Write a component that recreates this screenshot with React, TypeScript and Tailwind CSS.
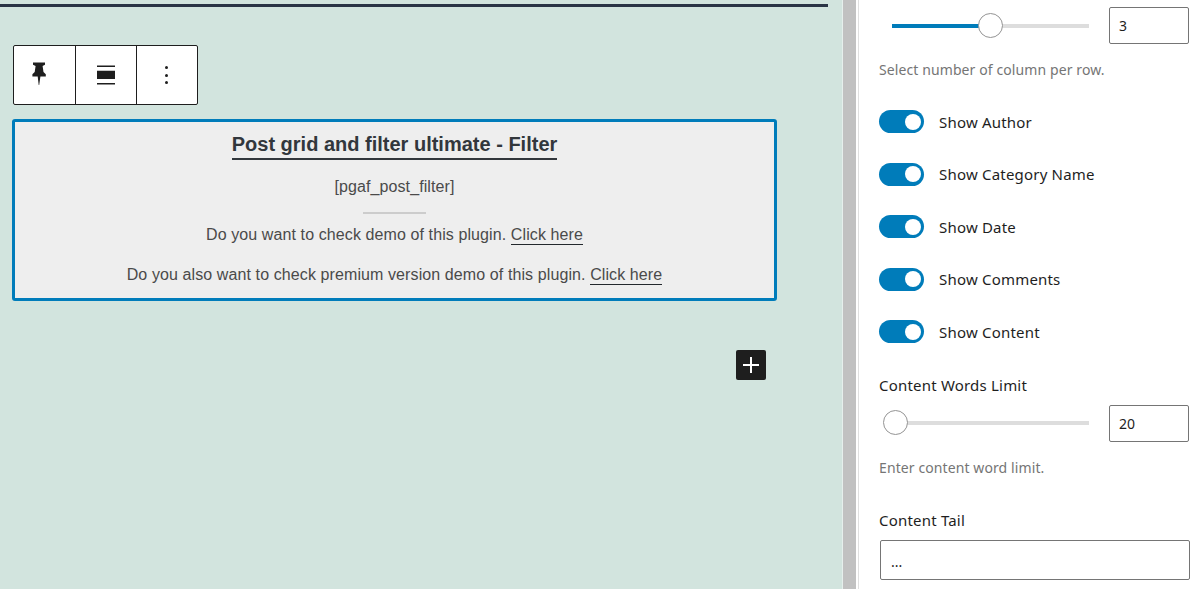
const sidebarFont = "font-['Noto_Sans',sans-serif]"

function Toggle({ label }: { label: string }) {
  return (
    <div className="flex items-center h-[23px] mb-[29.5px]">
      <div className="w-[45px] h-[23px] rounded-full bg-[#007cba] flex items-center justify-end pr-[3px]">
        <div className="w-[16px] h-[16px] rounded-full bg-white" />
      </div>
      <span className="ml-[15px] mt-[1px] text-[15px] tracking-[0.2px] text-[#1e1e1e]">{label}</span>
    </div>
  )
}

function Slider({ percent, value }: { percent: number; value: string }) {
  return (
    <div className="flex items-center">
      <div className="relative w-[197px] h-[4px] ml-[13px] bg-[#dddddd]">
        <div className="h-full bg-[#007cba]" style={{ width: `${percent}%` }} />
        <div
          className="absolute top-[-11px] ml-[-12.5px] w-[25px] h-[25px] rounded-full bg-white border border-[#949494]"
          style={{ left: `${percent}%` }}
        />
      </div>
      <div className="ml-[20px] w-[80px] h-[37px] border border-[#757575] rounded-[2px] pl-[9px] flex items-center text-[14px] text-[#1e1e1e]">
        {value}
      </div>
    </div>
  )
}

export default function App() {
  return (
    <div className="flex h-[589px] w-[1203px] overflow-hidden bg-white">
      <main className="w-[842px] shrink-0 bg-[#d2e4de] pt-[4px] flex flex-col">
        <div className="w-[828px] h-[3px] bg-[#2a3445]" />
        <div className="ml-[13px] mt-[38px] w-[185px] h-[60px] flex bg-white border border-[#1e1e1e] rounded-[2px]">
          <div className="w-[62px] border-r border-[#1e1e1e] flex items-center justify-center">
            <svg width="24" height="28" viewBox="0 0 24 28" className="text-[#1e1e1e] ml-[-11px] mt-[-2px]">
              <path
                d="M6 2.500h12v2.200l-2.400 1.300.9 6 2.300 2.200v2.300h-5.400L12.200 25h-.5l-1-8.500H5.400v-2.300l2.300-2.200.9-6L6 4.700z"
                fill="currentColor"
              />
            </svg>
          </div>
          <div className="w-[61px] border-r border-[#1e1e1e] flex items-center justify-center">
            <svg width="24" height="24" viewBox="0 0 24 24" className="text-[#1e1e1e]">
              <path d="M3 2.500h18V4H3zM3 7.700h18V16H3zM3 20h18v1.500H3z" fill="currentColor" />
            </svg>
          </div>
          <div className="flex-1 flex flex-col items-center justify-center gap-[4.600px] pr-[1px]">
            <div className="w-[3px] h-[3px] rounded-full bg-[#1e1e1e]" />
            <div className="w-[3px] h-[3px] rounded-full bg-[#1e1e1e]" />
            <div className="w-[3px] h-[3px] rounded-full bg-[#1e1e1e]" />
          </div>
        </div>
        <section className="ml-[12px] mt-[14px] w-[765px] h-[182px] bg-[#eeeeee] border-[3px] border-[#007cba] rounded-[3px] flex flex-col items-center font-['Liberation_Sans',sans-serif] text-[16px] tracking-[0.1px] text-[#4a4a4a]">
          <h2 className="mt-[9px] text-[20px] leading-[27px] font-bold tracking-normal text-[#32373c] border-b-2 border-[#32373c] h-[29px]">
            Post grid and filter ultimate - Filter
          </h2>
          <p className="mt-[15px] leading-[24px]">[pgaf_post_filter]</p>
          <div className="mt-[13px] w-[63px] h-[2px] bg-[#cccccc]" />
          <p className="mt-[9px] leading-[24px]">
            Do you want to check demo of this plugin.{' '}
            <span className="border-b border-[#23282d] pb-[1px]">Click here</span>
          </p>
          <p className="mt-[16px] leading-[24px]">
            Do you also want to check premium version demo of this plugin.{' '}
            <span className="border-b border-[#23282d] pb-[1px]">Click here</span>
          </p>
        </section>
        <button className="ml-[736px] mt-[49px] w-[30px] h-[30px] rounded-[2px] bg-[#1e1e1e] flex items-center justify-center">
          <svg width="24" height="24" viewBox="0 0 24 24">
            <path d="M20 11h-7V4h-2v7H4v2h7v7h2v-7h7z" fill="#ffffff" />
          </svg>
        </button>
      </main>

      <div className="w-[1px] shrink-0 bg-[#e6efec]" />
      <div className="w-[13px] shrink-0 bg-[#c1c1c1]" />
      <div className="w-[2px] shrink-0 bg-white" />
      <div className="w-[1px] shrink-0 bg-[#e0e0e0]" />

      <aside className={`flex-1 pl-[20px] pt-[7px] ${sidebarFont}`}>
        <Slider percent={50} value="3" />
        <p className="mt-[16px] h-[20px] text-[14px] tracking-[0.1px] leading-[20px] text-[#757575]">
          Select number of column per row.
        </p>
        <div className="mt-[30px] flex flex-col">
          <Toggle label="Show Author" />
          <Toggle label="Show Category Name" />
          <Toggle label="Show Date" />
          <Toggle label="Show Comments" />
          <Toggle label="Show Content" />
        </div>
        <div className="mt-[2px] h-[20px] text-[15px] tracking-[0.2px] leading-[20px] text-[#1e1e1e]">
          Content Words Limit
        </div>
        <div className="mt-[10px]">
          <Slider percent={2} value="20" />
        </div>
        <p className="mt-[16px] h-[20px] text-[14px] tracking-[0.1px] leading-[20px] text-[#757575]">
          Enter content word limit.
        </p>
        <div className="mt-[32px] h-[20px] text-[15px] tracking-[0.2px] leading-[20px] text-[#1e1e1e]">Content Tail</div>
        <div className="mt-[10px] ml-[1px] w-[310px] h-[40px] border border-[#757575] rounded-[2px] pl-[10px] pt-[3px] flex items-center text-[14px] text-[#1e1e1e]">
          ...
        </div>
      </aside>
    </div>
  )
}
